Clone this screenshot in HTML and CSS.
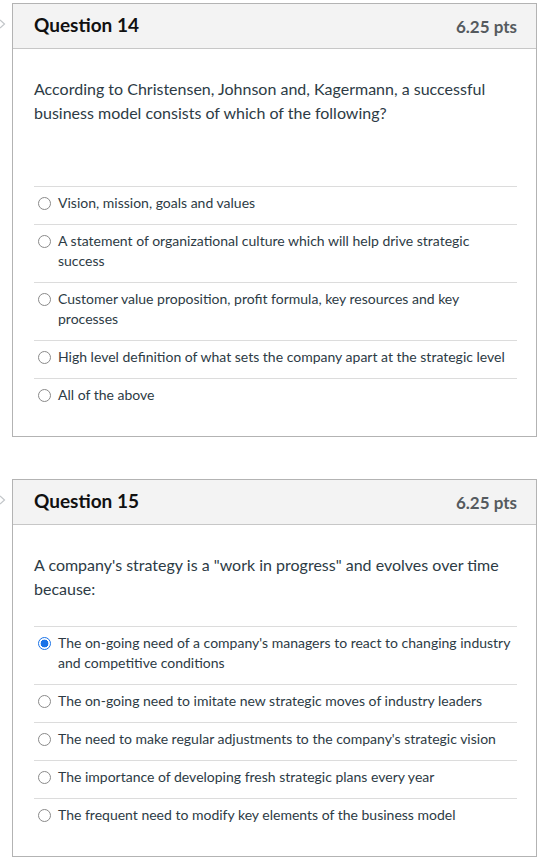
FILE: index.html
```html
<!DOCTYPE html>
<html lang="en">
<head>
<meta charset="utf-8">
<link rel="stylesheet" href="styles.css">
</head>
<body>
<div class="quiz">
  <div class="question-row">
    <div class="flag"><svg width="8" height="12" viewBox="0 0 8 12"><path d="M0 2 L4.5 6 L0 10" fill="none" stroke="#c2c6c9" stroke-width="1.2"/></svg></div>
    <section class="card">
      <header class="card-header">
        <h2 class="title">Question 14</h2>
        <span class="pts">6.25 pts</span>
      </header>
      <div class="card-body">
        <p class="prompt prompt-long">According to Christensen, Johnson and, Kagermann, a successful business model consists of which of the following?</p>
        <ul class="answers">
          <li class="answer"><span class="radio"></span><span class="label">Vision, mission, goals and values</span></li>
          <li class="answer"><span class="radio"></span><span class="label">A statement of organizational culture which will help drive strategic success</span></li>
          <li class="answer"><span class="radio"></span><span class="label">Customer value proposition, profit formula, key resources and key processes</span></li>
          <li class="answer"><span class="radio"></span><span class="label">High level definition of what sets the company apart at the strategic level</span></li>
          <li class="answer"><span class="radio"></span><span class="label">All of the above</span></li>
        </ul>
      </div>
    </section>
  </div>
  <div class="question-row">
    <div class="flag"><svg width="8" height="12" viewBox="0 0 8 12"><path d="M0 2 L4.5 6 L0 10" fill="none" stroke="#c2c6c9" stroke-width="1.2"/></svg></div>
    <section class="card">
      <header class="card-header">
        <h2 class="title">Question 15</h2>
        <span class="pts">6.25 pts</span>
      </header>
      <div class="card-body">
        <p class="prompt">A company's strategy is a "work in progress" and evolves over time because:</p>
        <ul class="answers">
          <li class="answer"><span class="radio checked"></span><span class="label">The on-going need of a company's managers to react to changing industry and competitive conditions</span></li>
          <li class="answer"><span class="radio"></span><span class="label">The on-going need to imitate new strategic moves of industry leaders</span></li>
          <li class="answer"><span class="radio"></span><span class="label">The need to make regular adjustments to the company's strategic vision</span></li>
          <li class="answer"><span class="radio"></span><span class="label">The importance of developing fresh strategic plans every year</span></li>
          <li class="answer"><span class="radio"></span><span class="label">The frequent need to modify key elements of the business model</span></li>
        </ul>
      </div>
    </section>
  </div>
</div>
</body>
</html>
```

FILE: styles.css
```css
* { box-sizing: border-box; }
html, body {
  margin: 0;
  padding: 0;
  background: #ffffff;
}
body {
  font-family: Lato, "Liberation Sans", sans-serif;
  color: #2d3b45;
}
.quiz {
  display: flex;
  flex-direction: column;
  gap: 42px;
  padding: 3px 5px 0 0;
}
.question-row {
  display: flex;
  align-items: flex-start;
}
.flag {
  width: 12px;
  flex: none;
  padding-top: 15px;
  display: flex;
}
.flag svg { display: block; }
.card {
  width: 525px;
  border: 1px solid #b3b3b3;
  background: #fff;
}
.card-header {
  height: 45px;
  background: #f3f3f3;
  border-bottom: 1px solid #c7c7c7;
  display: flex;
  align-items: center;
  justify-content: space-between;
  padding: 0 19px 3px 21px;
}
.title {
  margin: 0;
  font-size: 19px;
  font-weight: 700;
  color: #111;
}
.pts {
  font-size: 17px;
  font-weight: 700;
  color: #555a5e;
  padding-top: 3px;
}
.card-body {
  padding: 28px 19px 20px 21px;
}
.prompt {
  margin: 0 0 25px;
  font-size: 16px;
  line-height: 24px;
}
.prompt-long {
  margin-bottom: 61px;
  padding-right: 20px;
}
.answers {
  list-style: none;
  margin: 0;
  padding: 0;
}
.answer {
  display: flex;
  align-items: flex-start;
  border-top: 1px solid #dcdcdc;
  padding: 6px 0 11px 4px;
  font-size: 14px;
  line-height: 20px;
}
.radio {
  flex: none;
  width: 13px;
  height: 13px;
  margin-top: 4px;
  margin-right: 7px;
  border: 1px solid #8a8a8a;
  border-radius: 50%;
  background: #fff;
}
.radio.checked {
  border: 1.5px solid #1a73e8;
  background: radial-gradient(circle, #1a73e8 0 3.6px, #fff 4.2px);
}
.label {
  flex: 1;
}
```
